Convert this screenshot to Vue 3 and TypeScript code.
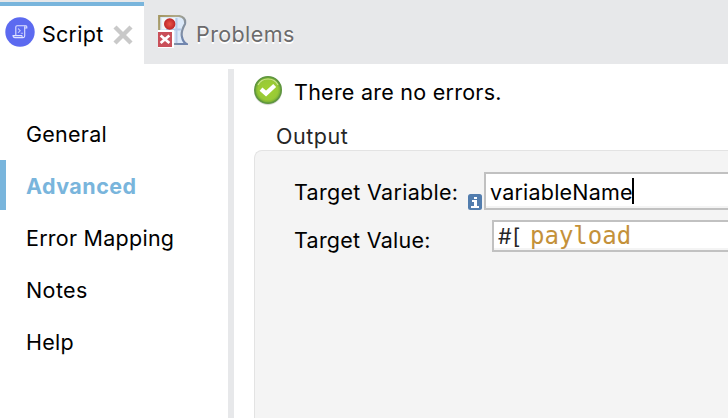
<script setup lang="ts">
import { ref } from 'vue'

interface Section {
  label: string
  spacing: string
}

const sections: Section[] = [
  { label: 'General', spacing: 'general' },
  { label: 'Advanced', spacing: 'advanced' },
  { label: 'Error Mapping', spacing: 'mapping' },
  { label: 'Notes', spacing: 'notes' },
  { label: 'Help', spacing: 'help' },
]
const active = ref('Advanced')
const variableName = ref('variableName')
</script>

<template>
  <div class="window">
    <header class="tabs">
      <div class="tab current">
        <svg class="script-icon" width="30" height="30" viewBox="0 0 30 30">
          <circle cx="15" cy="15" r="14.7" fill="#5c6af0" />
          <g fill="none" stroke="#dfe2ff" stroke-width="1.1">
            <path d="M10.8 18V10Q10.8 8.7 12 8.7H21Q19.7 8.7 19.7 10.2V19Q19.7 20.6 18.2 20.6H10Q8 20.6 8 18.6H16.8Q16.8 20.6 18.2 20.6" />
            <path d="M19.7 11H21.8V9.7Q21.8 8.7 21 8.7" />
            <path d="M13 11.5L15.2 13.7L13 15.9M15.8 16.3H18" opacity=".75" />
          </g>
        </svg>
        <span class="tab-label script">Script</span>
        <svg class="close" width="20" height="20" viewBox="0 0 20 20">
          <path d="M2 2L18 18M18 2L2 18" stroke="#c9c9c9" stroke-width="4.4" />
        </svg>
      </div>
      <div class="tab idle">
        <svg class="problem-icon" width="30" height="34" viewBox="0 0 30 34">
          <defs>
            <linearGradient id="edge" x1="0" y1="0" x2="1" y2="0.6">
              <stop offset="0" stop-color="#a39660" />
              <stop offset="0.45" stop-color="#b0a987" />
              <stop offset="1" stop-color="#7186ae" />
            </linearGradient>
            <radialGradient id="red"><stop offset="0" stop-color="#e9564b" /><stop offset="1" stop-color="#bf2528" /></radialGradient>
          </defs>
          <path d="M1.2 1H21Q28 2 27 9Q22.500 17 24 22Q25 27 28.500 29H1.200Z" fill="#dce9f9" stroke="url(#edge)" stroke-width="2.2" />
          <path d="M4 3H17V14H4Z" fill="#f3f6f6" />
          <path d="M18.500 3V28M8 14.500H23" stroke="#b6cae8" stroke-width="2" />
          <circle cx="11.7" cy="9" r="5.700" fill="url(#red)" />
          <path d="M0 15H16V33H0Z" fill="#fff" />
          <path d="M0 17H14V32H0Z" fill="#c94f59" />
          <path d="M2.600 20.500L11.400 28M11.400 20.500L2.600 28" stroke="#fff" stroke-width="2.700" />
        </svg>
        <span class="tab-label problems">Problems</span>
      </div>
    </header>
    <div class="body">
      <nav class="side">
        <div v-for="s in sections" :key="s.label" class="item" :class="[s.spacing, { active: s.label === active }]" @click="active = s.label">
          <span>{{ s.label }}</span>
        </div>
      </nav>
      <div class="divider"></div>
      <main class="content">
        <div class="status">
          <svg width="30" height="32" viewBox="0 0 30 32">
            <defs>
              <radialGradient id="green" cx=".5" cy=".5" r=".5"><stop offset="0" stop-color="#a2d22f" /><stop offset=".75" stop-color="#98c936" /><stop offset="1" stop-color="#71a735" /></radialGradient>
            </defs>
            <circle cx="15" cy="16.2" r="14" fill="#000" opacity=".14" />
            <circle cx="15" cy="15" r="13.2" fill="url(#green)" stroke="#5f963f" stroke-width="1.6" />
            <path d="M5 10Q8 4 15 4T25 10" fill="none" stroke="#cbe68d" stroke-width="1.200" />
            <path d="M8 14.200L13 18.500L21.700 10.500" fill="none" stroke="#fff" stroke-width="4.300" />
          </svg>
          <span class="status-text">There are no errors.</span>
        </div>
        <div class="group-title"><span>Output</span></div>
        <section class="group">
          <div class="row first">
            <label class="variable-label">Target Variable:</label>
            <svg class="info" width="14" height="16" viewBox="0 0 14 16">
              <rect width="14" height="16" rx="2.5" fill="#527dae" />
              <path d="M6 3H9V5H6ZM4 6H9V12H11V14H3V12H6V8H4Z" fill="#fff" />
            </svg>
            <div class="field name"><span class="name-text">{{ variableName }}</span><i class="caret"></i></div>
          </div>
          <div class="row second">
            <label class="value-label">Target Value:</label>
            <div class="field value"><span class="prefix">#[</span><span class="code">payload</span></div>
          </div>
        </section>
      </main>
    </div>
  </div>
</template>

<style>
body { margin: 0; overflow: hidden; }
</style>

<style scoped>
.window { width: 728px; height: 418px; box-sizing: border-box; display: flex; flex-direction: column; background: #fff; color: #000; font: 21.5px/26px Inter, sans-serif; letter-spacing: .25px; white-space: nowrap; overflow: hidden; }
.window svg { flex: none; display: block; }
.tabs { height: 64px; flex: none; display: flex; background: #e7e8ea; }
.tab { display: flex; box-sizing: border-box; }
.current { width: 144px; background: #fff; border-top: 2px solid #e7e8ea; padding-left: 5px; box-shadow: inset 0 4px #79b5dc; }
.script-icon { margin-top: 15px; }
.script { margin: 19px 0 0 7px; width: 63px; }
.close { margin: 23px 0 0 8px; }
.idle { padding-left: 14px; }
.problem-icon { margin-top: 15px; }
.problems { margin: 21px 0 0 8px; color: #6b6b6c; text-shadow: 0 2px #fff; letter-spacing: .4px; }
.body { display: flex; flex: 1; min-height: 0; }
.side { width: 228px; padding-top: 44px; box-sizing: border-box; flex: none; }
.item { height: 50px; margin-bottom: 2px; box-sizing: border-box; padding: 13px 0 0 26px; }
.active { border-left: 6px solid #79b5dc; padding-left: 20px; color: #79b5dc; font-weight: 700; letter-spacing: .45px; }
.notes { letter-spacing: .4px; }
.divider { width: 6px; margin-top: 5px; background: #e7e8ea; flex: none; }
.content { flex: 1; padding: 11px 0 0 20px; min-width: 0; display: flex; flex-direction: column; }
.status { display: flex; height: 32px; margin-left: -1px; }
.status-text { margin: 4px 0 0 11px; }
.group-title { padding: 16px 0 0 22px; height: 27px; color: #262626; letter-spacing: .55px; }
.group { flex: 1; box-sizing: border-box; border: 1px solid #e3e3e3; border-right: 0; border-bottom: 0; border-top-left-radius: 8px; background: #f4f4f4; padding: 21px 0 0 39px; }
.row { display: flex; }
.first { height: 38px; }
.variable-label { width: 165px; padding-top: 7px; margin-right: 9px; letter-spacing: .3px; }
.info { margin-top: 22px; }
.field { box-sizing: border-box; border: 2px solid #c1c1c1; border-right: 0; background: #fff; display: flex; flex: 1; }
.name { margin-left: 2px; padding: 4px 0 0 4px; letter-spacing: .2px; box-shadow: inset 0 -2px #f4f4f4; }
.name-text { padding-top: 1px; }
.caret { width: 2px; height: 26px; background: #000; margin-left: -1px; }
.second { height: 32px; margin-top: 10px; }
.value-label { width: 198px; padding-top: 7px; }
.value { padding-left: 4px; box-shadow: inset 0 -2px #f4f4f4; }
.prefix { color: #262626; width: 32px; padding-top: 1px; letter-spacing: 1px; }
.code { font: 24px/28px "DejaVu Sans Mono", monospace; color: #c4913a; letter-spacing: 0; }
</style>
